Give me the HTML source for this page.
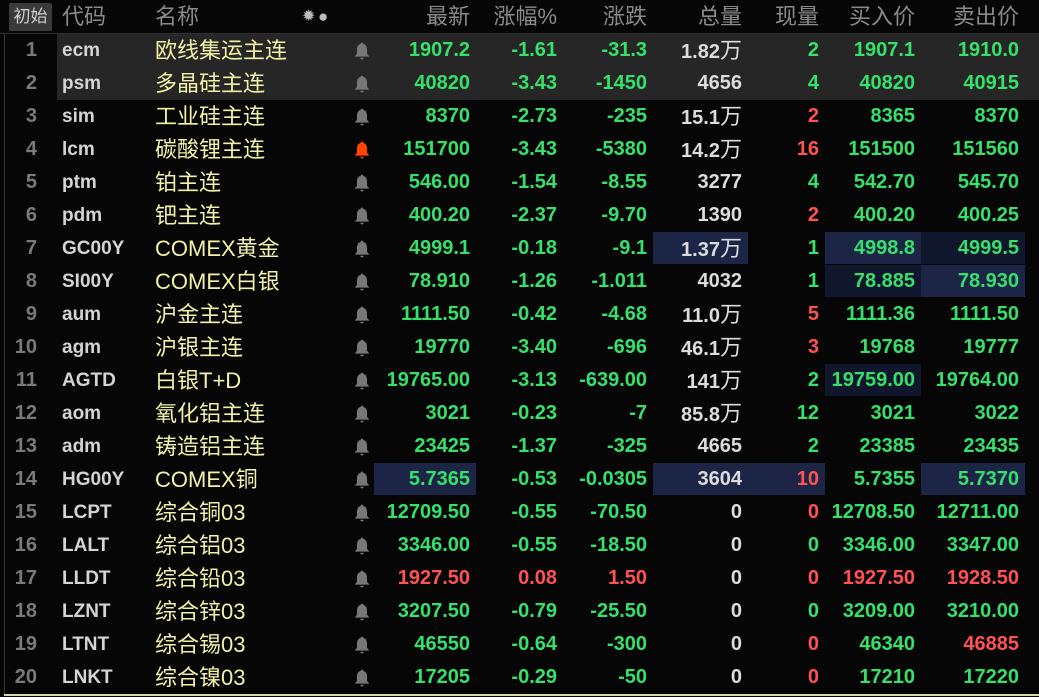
<!DOCTYPE html>
<html><head><meta charset="utf-8"><style>
body{margin:0;background:#060606;width:1039px;height:697px;overflow:hidden;position:relative;font-family:"Liberation Sans","Noto Sans CJK SC",sans-serif}
.h{position:absolute;top:0;left:0;width:1039px;height:33px;border-bottom:1px solid #2e2e2e;color:#8a8a8a;font-size:22px;line-height:34px;font-family:"Liberation Sans","Noto Sans CJK SC",sans-serif}
.h span,.r span{position:absolute;white-space:nowrap}
.btn{left:9px;top:3px;width:43px;height:28px;background:#3a3a3a;border-radius:2px;color:#d0d0d0;font-size:17px;line-height:28px;text-align:center}
.r{position:absolute;left:0;width:1039px;height:33px;line-height:33px;font-size:20px;font-weight:bold}
.n{right:1002px;color:#7a7a7a;font-weight:bold}
.c{left:62px;color:#d4d4d4;font-size:19px}
.m{left:155px;color:#f2f2a6;font-weight:normal;font-size:22px}
.b{position:absolute;left:354px;top:8px;width:16px;height:18px}
.g{color:#36e06a}.rd{color:#ff5252}.w{color:#dcdcdc}
.r span.wan{position:static;font-weight:normal;font-size:22px}
.c1{right:569px}.c2{right:482px}.c3{right:392px}.c4{right:297px}.c5{right:220px}.c6{right:124px}.c7{right:20px}
.hb{position:absolute;top:0;height:32px;background:#1c2546}
.hd{position:absolute;top:0;height:32px;background:#10162c}
.vl{position:absolute;left:4px;top:34px;width:1px;height:660px;background:#333}
.bl{position:absolute;left:4px;top:694px;width:1035px;height:2px;background:#d8d8a8}
</style></head><body>
<div class="h">
<span class="btn">初始</span>
<span style="left:62px">代码</span><span style="left:155px">名称</span>
<span style="left:302px;top:0;font-size:16px;color:#bbb">✹</span><span style="left:318px;top:0;font-size:17px;color:#bbb">●</span>
<span class="c1">最新</span><span class="c2">涨幅%</span><span class="c3">涨跌</span><span class="c4">总量</span><span class="c5">现量</span><span class="c6">买入价</span><span class="c7">卖出价</span>
</div>
<div class="vl"></div>
<div style="position:absolute;left:57px;top:34px;width:982px;height:66px;background:#262626"></div>

<svg width="0" height="0" style="position:absolute"><defs><symbol id="bell" viewBox="0 0 14 16"><path d="M7 0.5c0.8 0 1.2 0.6 1.2 1.2C10.5 2.3 11.5 4.3 11.5 7v3.5l2 2.5H0.5l2-2.5V7C2.5 4.3 3.5 2.3 5.8 1.7 5.8 1.1 6.2 0.5 7 0.5zM5.5 14h3c0 0.9-0.7 1.5-1.5 1.5S5.5 14.9 5.5 14z"/></symbol></defs></svg>

<div class="r" style="top:34px"><span class="n">1</span><span class="c">ecm</span><span class="m">欧线集运主连</span><svg class="b" fill="#777"><use href="#bell"/></svg><span class="c1 g">1907.2</span><span class="c2 g">-1.61</span><span class="c3 g">-31.3</span><span class="c4 w">1.82<span class="wan">万</span></span><span class="c5 g">2</span><span class="c6 g">1907.1</span><span class="c7 g">1910.0</span></div>
<div class="r" style="top:67px"><span class="n">2</span><span class="c">psm</span><span class="m">多晶硅主连</span><svg class="b" fill="#777"><use href="#bell"/></svg><span class="c1 g">40820</span><span class="c2 g">-3.43</span><span class="c3 g">-1450</span><span class="c4 w">4656</span><span class="c5 g">4</span><span class="c6 g">40820</span><span class="c7 g">40915</span></div>
<div class="r" style="top:100px"><span class="n">3</span><span class="c">sim</span><span class="m">工业硅主连</span><svg class="b" fill="#777"><use href="#bell"/></svg><span class="c1 g">8370</span><span class="c2 g">-2.73</span><span class="c3 g">-235</span><span class="c4 w">15.1<span class="wan">万</span></span><span class="c5 rd">2</span><span class="c6 g">8365</span><span class="c7 g">8370</span></div>
<div class="r" style="top:133px"><span class="n">4</span><span class="c">lcm</span><span class="m">碳酸锂主连</span><svg class="b" fill="#ff4500"><use href="#bell"/></svg><span class="c1 g">151700</span><span class="c2 g">-3.43</span><span class="c3 g">-5380</span><span class="c4 w">14.2<span class="wan">万</span></span><span class="c5 rd">16</span><span class="c6 g">151500</span><span class="c7 g">151560</span></div>
<div class="r" style="top:166px"><span class="n">5</span><span class="c">ptm</span><span class="m">铂主连</span><svg class="b" fill="#777"><use href="#bell"/></svg><span class="c1 g">546.00</span><span class="c2 g">-1.54</span><span class="c3 g">-8.55</span><span class="c4 w">3277</span><span class="c5 g">4</span><span class="c6 g">542.70</span><span class="c7 g">545.70</span></div>
<div class="r" style="top:199px"><span class="n">6</span><span class="c">pdm</span><span class="m">钯主连</span><svg class="b" fill="#777"><use href="#bell"/></svg><span class="c1 g">400.20</span><span class="c2 g">-2.37</span><span class="c3 g">-9.70</span><span class="c4 w">1390</span><span class="c5 rd">2</span><span class="c6 g">400.20</span><span class="c7 g">400.25</span></div>
<div class="r" style="top:232px"><div class="hb" style="left:653px;width:95px"></div><div class="hb" style="left:825px;width:96px"></div><div class="hd" style="left:921px;width:104px"></div><span class="n">7</span><span class="c">GC00Y</span><span class="m">COMEX黄金</span><svg class="b" fill="#777"><use href="#bell"/></svg><span class="c1 g">4999.1</span><span class="c2 g">-0.18</span><span class="c3 g">-9.1</span><span class="c4 w">1.37<span class="wan">万</span></span><span class="c5 g">1</span><span class="c6 g">4998.8</span><span class="c7 g">4999.5</span></div>
<div class="r" style="top:265px"><div class="hd" style="left:825px;width:96px"></div><div class="hb" style="left:921px;width:104px"></div><span class="n">8</span><span class="c">SI00Y</span><span class="m">COMEX白银</span><svg class="b" fill="#777"><use href="#bell"/></svg><span class="c1 g">78.910</span><span class="c2 g">-1.26</span><span class="c3 g">-1.011</span><span class="c4 w">4032</span><span class="c5 g">1</span><span class="c6 g">78.885</span><span class="c7 g">78.930</span></div>
<div class="r" style="top:298px"><span class="n">9</span><span class="c">aum</span><span class="m">沪金主连</span><svg class="b" fill="#777"><use href="#bell"/></svg><span class="c1 g">1111.50</span><span class="c2 g">-0.42</span><span class="c3 g">-4.68</span><span class="c4 w">11.0<span class="wan">万</span></span><span class="c5 rd">5</span><span class="c6 g">1111.36</span><span class="c7 g">1111.50</span></div>
<div class="r" style="top:331px"><span class="n">10</span><span class="c">agm</span><span class="m">沪银主连</span><svg class="b" fill="#777"><use href="#bell"/></svg><span class="c1 g">19770</span><span class="c2 g">-3.40</span><span class="c3 g">-696</span><span class="c4 w">46.1<span class="wan">万</span></span><span class="c5 rd">3</span><span class="c6 g">19768</span><span class="c7 g">19777</span></div>
<div class="r" style="top:364px"><div class="hd" style="left:825px;width:96px"></div><span class="n">11</span><span class="c">AGTD</span><span class="m">白银T+D</span><svg class="b" fill="#777"><use href="#bell"/></svg><span class="c1 g">19765.00</span><span class="c2 g">-3.13</span><span class="c3 g">-639.00</span><span class="c4 w">141<span class="wan">万</span></span><span class="c5 g">2</span><span class="c6 g">19759.00</span><span class="c7 g">19764.00</span></div>
<div class="r" style="top:397px"><span class="n">12</span><span class="c">aom</span><span class="m">氧化铝主连</span><svg class="b" fill="#777"><use href="#bell"/></svg><span class="c1 g">3021</span><span class="c2 g">-0.23</span><span class="c3 g">-7</span><span class="c4 w">85.8<span class="wan">万</span></span><span class="c5 g">12</span><span class="c6 g">3021</span><span class="c7 g">3022</span></div>
<div class="r" style="top:430px"><span class="n">13</span><span class="c">adm</span><span class="m">铸造铝主连</span><svg class="b" fill="#777"><use href="#bell"/></svg><span class="c1 g">23425</span><span class="c2 g">-1.37</span><span class="c3 g">-325</span><span class="c4 w">4665</span><span class="c5 g">2</span><span class="c6 g">23385</span><span class="c7 g">23435</span></div>
<div class="r" style="top:463px"><div class="hb" style="left:374px;width:102px"></div><div class="hb" style="left:653px;width:172px"></div><div class="hb" style="left:921px;width:104px"></div><span class="n">14</span><span class="c">HG00Y</span><span class="m">COMEX铜</span><svg class="b" fill="#777"><use href="#bell"/></svg><span class="c1 g">5.7365</span><span class="c2 g">-0.53</span><span class="c3 g">-0.0305</span><span class="c4 w">3604</span><span class="c5 rd">10</span><span class="c6 g">5.7355</span><span class="c7 g">5.7370</span></div>
<div class="r" style="top:496px"><span class="n">15</span><span class="c">LCPT</span><span class="m">综合铜03</span><svg class="b" fill="#777"><use href="#bell"/></svg><span class="c1 g">12709.50</span><span class="c2 g">-0.55</span><span class="c3 g">-70.50</span><span class="c4 w">0</span><span class="c5 rd">0</span><span class="c6 g">12708.50</span><span class="c7 g">12711.00</span></div>
<div class="r" style="top:529px"><span class="n">16</span><span class="c">LALT</span><span class="m">综合铝03</span><svg class="b" fill="#777"><use href="#bell"/></svg><span class="c1 g">3346.00</span><span class="c2 g">-0.55</span><span class="c3 g">-18.50</span><span class="c4 w">0</span><span class="c5 g">0</span><span class="c6 g">3346.00</span><span class="c7 g">3347.00</span></div>
<div class="r" style="top:562px"><span class="n">17</span><span class="c">LLDT</span><span class="m">综合铅03</span><svg class="b" fill="#777"><use href="#bell"/></svg><span class="c1 rd">1927.50</span><span class="c2 rd">0.08</span><span class="c3 rd">1.50</span><span class="c4 w">0</span><span class="c5 rd">0</span><span class="c6 rd">1927.50</span><span class="c7 rd">1928.50</span></div>
<div class="r" style="top:595px"><span class="n">18</span><span class="c">LZNT</span><span class="m">综合锌03</span><svg class="b" fill="#777"><use href="#bell"/></svg><span class="c1 g">3207.50</span><span class="c2 g">-0.79</span><span class="c3 g">-25.50</span><span class="c4 w">0</span><span class="c5 g">0</span><span class="c6 g">3209.00</span><span class="c7 g">3210.00</span></div>
<div class="r" style="top:628px"><span class="n">19</span><span class="c">LTNT</span><span class="m">综合锡03</span><svg class="b" fill="#777"><use href="#bell"/></svg><span class="c1 g">46550</span><span class="c2 g">-0.64</span><span class="c3 g">-300</span><span class="c4 w">0</span><span class="c5 rd">0</span><span class="c6 g">46340</span><span class="c7 rd">46885</span></div>
<div class="r" style="top:661px"><span class="n">20</span><span class="c">LNKT</span><span class="m">综合镍03</span><svg class="b" fill="#777"><use href="#bell"/></svg><span class="c1 g">17205</span><span class="c2 g">-0.29</span><span class="c3 g">-50</span><span class="c4 w">0</span><span class="c5 rd">0</span><span class="c6 g">17210</span><span class="c7 g">17220</span></div>
<div class="bl"></div>
</body></html>
